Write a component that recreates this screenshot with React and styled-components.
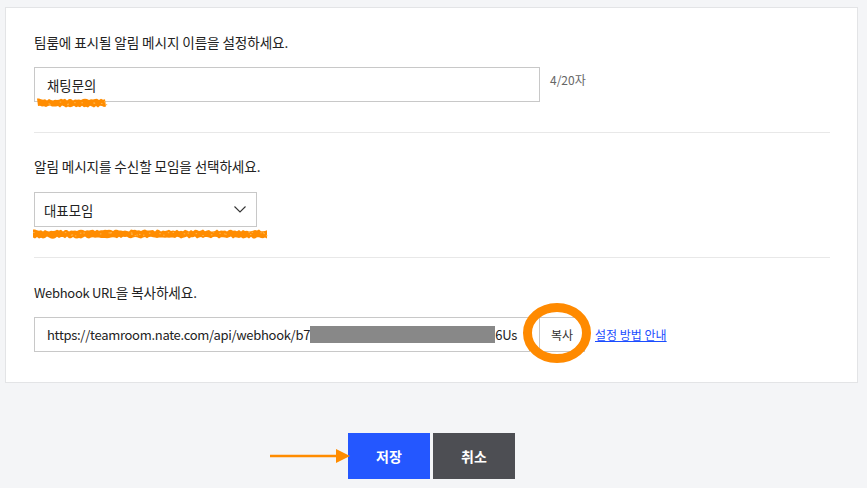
import React from "react";
import styled, { createGlobalStyle } from "styled-components";

const GlobalStyle = createGlobalStyle`
  html, body {
    margin: 0;
    padding: 0;
    background: #f4f5f7;
  }
  body {
    font-family: "Noto Sans CJK KR", "Noto Sans", sans-serif;
    color: #222;
    -webkit-font-smoothing: antialiased;
  }
`;

const Page = styled.div`
  width: 867px;
  height: 488px;
  overflow: hidden;
  padding-top: 7px;
  box-sizing: border-box;
`;

const Card = styled.div`
  margin: 0 9px 0 5px;
  background: #fff;
  border: 1px solid #e3e4e6;
  padding: 0 27px 0 28px;
`;

const Section = styled.div`
  position: relative;
  padding: ${(p) => (p.$first ? "24px" : "23px")} 0 30px;
  border-bottom: ${(p) => (p.$last ? "none" : "1px solid #e8e8e8")};
`;

const Label = styled.div`
  height: 20px;
  font-size: 13.6px;
  line-height: 20px;
  color: #222;
  letter-spacing: -0.1px;
`;

const Latin = styled.span`
  font-size: 13px;
  letter-spacing: -0.3px;
`;

const Row = styled.div`
  display: flex;
  align-items: center;
  margin-top: ${(p) => p.$gap || 15}px;
`;

const TextBox = styled.div`
  box-sizing: border-box;
  width: ${(p) => p.$w}px;
  height: 35px;
  border: 1px solid #c8c8c8;
  padding: 0 12px;
  display: flex;
  align-items: center;
  font-size: 13.4px;
  color: #222;
  white-space: nowrap;
  overflow: hidden;
`;

const Counter = styled.span`
  margin-left: 10px;
  margin-top: -11px;
  font-size: 12px;
  color: #666;
`;

const SelectBox = styled(TextBox)`
  justify-content: space-between;
  padding: 0 10px 0 9px;
`;

const Masked = styled.span`
  display: inline-block;
  width: 193px;
  height: 17px;
  background: #888;
  vertical-align: middle;
`;

const CopyButton = styled.button`
  box-sizing: border-box;
  width: 46px;
  height: 35px;
  margin-left: 9px;
  background: #fff;
  border: 1px solid #c8c8c8;
  font-family: inherit;
  font-size: 12px;
  color: #333;
  padding: 0;
`;

const HelpLink = styled.a`
  margin-left: 10px;
  font-size: 12px;
  color: #1a4dff;
  text-decoration: underline;
  cursor: pointer;
`;

const Footer = styled.div`
  position: relative;
  margin: 50px 9px 0 5px;
  display: flex;
  justify-content: center;
  gap: 3px;
`;

const ActionButton = styled.button`
  width: 82px;
  height: 46px;
  border: none;
  padding: 0;
  font-family: inherit;
  font-size: 14px;
  font-weight: 700;
  color: #fff;
  background: ${(p) => (p.$primary ? "#2457ff" : "#4d4e53")};
`;

const Overlay = styled.svg`
  position: absolute;
  pointer-events: none;
  overflow: visible;
`;

// deterministic noise so the highlighter band looks hand-drawn
const noise = (n) => {
  const s = Math.sin(n * 12.9898) * 43758.5453;
  return s - Math.floor(s);
};

const Scribble = ({ left, top, width }) => {
  let upper = "";
  let lower = "";
  for (let x = 0; x <= width; x += 2) {
    upper += `${x},${(0.5 + noise(x) * 2).toFixed(1)} `;
  }
  for (let x = width; x >= 0; x -= 2) {
    lower += `${x},${(7.5 + noise(x + 99) * 2.2).toFixed(1)} `;
  }
  const specks = [];
  for (let i = 0; i < width / 6; i++) {
    specks.push(
      <rect
        key={i}
        x={(noise(i + 7) * width).toFixed(1)}
        y={(2.5 + noise(i + 31) * 4).toFixed(1)}
        width="1.5"
        height="1"
        fill="#ffb347"
      />
    );
  }
  return (
    <Overlay
      style={{ left, top }}
      width={width}
      height="10"
      viewBox={`0 0 ${width} 10`}
    >
      <polygon points={upper + lower} fill="#ff8c00" />
      {specks}
    </Overlay>
  );
};

const Chevron = () => (
  <svg width="12" height="7" viewBox="0 0 12 7">
    <path d="M0.5 0.5 L6 6 L11.5 0.5" fill="none" stroke="#333" strokeWidth="1.1" />
  </svg>
);

export default function App() {
  return (
    <>
      <GlobalStyle />
      <Page>
        <Card>
          <Section $first>
            <Label>팀룸에 표시될 알림 메시지 이름을 설정하세요.</Label>
            <Row>
              <TextBox $w={506}>채팅문의</TextBox>
              <Counter>4/20자</Counter>
            </Row>
            <Scribble left={3} top={90} width={69} />
          </Section>
          <Section>
            <Label>알림 메시지를 수신할 모임을 선택하세요.</Label>
            <Row $gap={16}>
              <SelectBox $w={223}>
                <span>대표모임</span>
                <Chevron />
              </SelectBox>
            </Row>
            <Scribble left={-1} top={96} width={234} />
          </Section>
          <Section $first $last>
            <Label>
              <Latin>Webhook URL</Latin>을 복사하세요.
            </Label>
            <Row>
              <TextBox $w={496}>
                <Latin>https://teamroom.nate.com/api/webhook/b7</Latin>
                <Masked />
                <Latin>6Us</Latin>
              </TextBox>
              <CopyButton>복사</CopyButton>
              <HelpLink>설정 방법 안내</HelpLink>
            </Row>
            <Overlay
              style={{ left: 489, top: 45 }}
              width="68"
              height="60"
              viewBox="0 0 68 60"
            >
              <ellipse
                cx="34"
                cy="30"
                rx="29.5"
                ry="25.5"
                fill="none"
                stroke="#ff8a00"
                strokeWidth="9"
              />
            </Overlay>
          </Section>
        </Card>
        <Footer>
          <Overlay style={{ left: 265, top: 15 }} width="80" height="16" viewBox="0 0 80 16">
            <line x1="0" y1="8" x2="68" y2="8" stroke="#ff8c00" strokeWidth="2.5" />
            <polygon points="66,1 80,8 66,15" fill="#ff8c00" />
          </Overlay>
          <ActionButton $primary>저장</ActionButton>
          <ActionButton>취소</ActionButton>
        </Footer>
      </Page>
    </>
  );
}
